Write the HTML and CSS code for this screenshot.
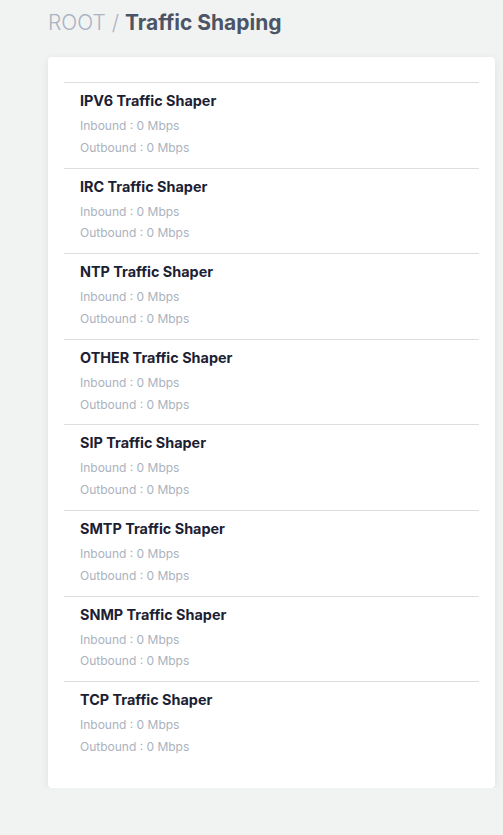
FILE: index.html
```html
<!DOCTYPE html>
<html>
<head>
<meta charset="utf-8">
<link rel="stylesheet" href="styles.css">
</head>
<body>
<div class="page">
  <h1 class="crumb"><span class="root">ROOT / </span><span class="current">Traffic Shaping</span></h1>
  <div class="card">
    <div class="item"><div class="title">IPV6 Traffic Shaper</div><div class="sub">Inbound : 0 Mbps</div><div class="sub">Outbound : 0 Mbps</div></div>
    <div class="item"><div class="title">IRC Traffic Shaper</div><div class="sub">Inbound : 0 Mbps</div><div class="sub">Outbound : 0 Mbps</div></div>
    <div class="item"><div class="title">NTP Traffic Shaper</div><div class="sub">Inbound : 0 Mbps</div><div class="sub">Outbound : 0 Mbps</div></div>
    <div class="item"><div class="title">OTHER Traffic Shaper</div><div class="sub">Inbound : 0 Mbps</div><div class="sub">Outbound : 0 Mbps</div></div>
    <div class="item"><div class="title">SIP Traffic Shaper</div><div class="sub">Inbound : 0 Mbps</div><div class="sub">Outbound : 0 Mbps</div></div>
    <div class="item"><div class="title">SMTP Traffic Shaper</div><div class="sub">Inbound : 0 Mbps</div><div class="sub">Outbound : 0 Mbps</div></div>
    <div class="item"><div class="title">SNMP Traffic Shaper</div><div class="sub">Inbound : 0 Mbps</div><div class="sub">Outbound : 0 Mbps</div></div>
    <div class="item"><div class="title">TCP Traffic Shaper</div><div class="sub">Inbound : 0 Mbps</div><div class="sub">Outbound : 0 Mbps</div></div>
  </div>
</div>
</body>
</html>
```

FILE: styles.css
```css
html, body {
  margin: 0;
  padding: 0;
  background: #f1f2f2;
  font-family: Inter, "Noto Sans", sans-serif;
}
.page {
  padding: 9px 8px 0 48px;
}
.crumb {
  margin: 0;
  font-size: 21px;
  line-height: 28px;
  font-weight: 400;
}
.root {
  color: #aab4c3;
  font-weight: 300;
}
.current {
  color: #4b5565;
  font-weight: 700;
}
.card {
  margin-top: 20px;
  background: #fff;
  border-radius: 4px;
  box-shadow: 0 2px 8px rgba(0,0,0,0.08);
  padding: 25px 16px 21px;
}
.item {
  border-top: 1px solid #dcdddf;
  padding: 8px 16px 9px;
}
.title {
  font-size: 14.4px;
  line-height: 20px;
  font-weight: 700;
  color: #1b2133;
  margin-bottom: 4px;
}
.sub {
  font-size: 12px;
  line-height: 21.8px;
  color: #aab2be;
}
```
